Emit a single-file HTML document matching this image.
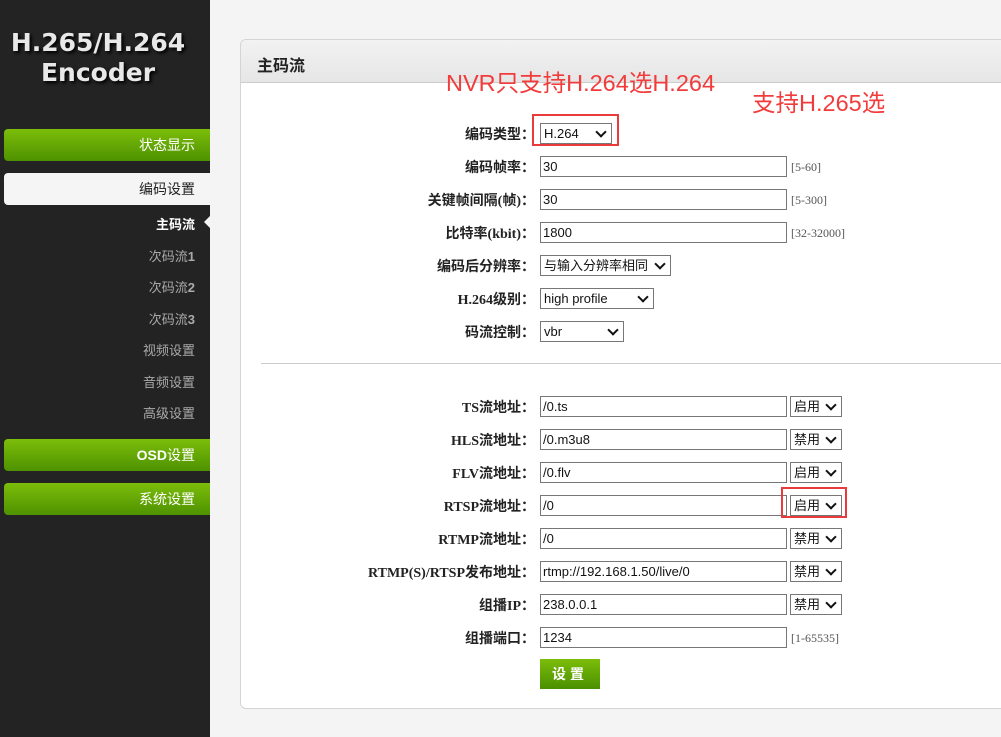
<!DOCTYPE html>
<html><head><meta charset="utf-8"><style>
*{margin:0;padding:0;box-sizing:border-box}
body{width:1001px;height:737px;overflow:hidden;background:#f4f4f4;font-family:"Liberation Sans","Noto Sans CJK SC",sans-serif;position:relative}
#side{position:absolute;left:0;top:0;width:210px;height:737px;background:#232323}
.logo{position:absolute;left:0;width:196px;text-align:center;color:#e8e8e8;font-weight:bold;font-size:25px;font-family:"DejaVu Sans",sans-serif;text-shadow:2px 2px 3px #000}
.btn{position:absolute;left:4px;width:206px;height:32px;border-radius:4px 0 0 4px;background:linear-gradient(#7cbd0a,#4e9200);color:#fff;font-size:14px;text-align:right;padding-right:15px;line-height:32px}
.btn.w{background:#f5f5f5;color:#222}
.sub{position:absolute;right:15px;font-size:13px;color:#aaa;text-align:right}
#panel{position:absolute;left:240px;top:39px;width:800px;height:670px;background:#fff;border:1px solid #d4d4d4;border-radius:6px 0 0 6px}
#hd{height:43px;background:linear-gradient(#f2f2f2,#e6e6e6);border-bottom:1px solid #ccc;border-radius:6px 0 0 0;font-weight:bold;font-size:16px;color:#222;padding:12px 0 0 16px}
.lab{position:absolute;right:466px;width:200px;text-align:right;font-size:14px;font-weight:bold;color:#222;font-family:"Liberation Serif","Noto Sans CJK SC",serif}
.in{position:absolute;left:540px;width:247px;height:21px;border:1px solid #777;font-size:13px;padding:2px 0 0 2px;color:#111;background:#fff;line-height:15px}
.sel{position:absolute;left:540px;height:21px;border:1px solid #777;font-size:13px;padding:2px 0 0 3px;color:#111;background:#fff;line-height:15px}
.sel:after{content:"";position:absolute;right:6px;top:4px;width:6px;height:6px;border-right:2px solid #111;border-bottom:2px solid #111;transform:rotate(45deg)}
.hint{position:absolute;left:791px;font-size:12px;color:#555;font-family:"Liberation Serif",serif}
.red{position:absolute;color:#f23c3c;font-size:23.5px;line-height:26px}
.rb{position:absolute;border:2px solid #e93b3b}
</style></head><body>
<div id="side">
<div class="logo" style="top:28px">H.265/H.264</div>
<div class="logo" style="top:58px">Encoder</div>
<div class="btn" style="top:129px">状态显示</div>
<div class="btn w" style="top:173px">编码设置</div>
<div class="sub" style="top:214px;color:#fff;font-weight:bold">主码流</div>
<div style="position:absolute;left:204px;top:216px;width:0;height:0;border-top:6px solid transparent;border-bottom:6px solid transparent;border-right:6px solid #f4f4f4"></div>
<div class="sub" style="top:246px">次码流<b>1</b></div>
<div class="sub" style="top:277px">次码流<b>2</b></div>
<div class="sub" style="top:309px">次码流<b>3</b></div>
<div class="sub" style="top:340px">视频设置</div>
<div class="sub" style="top:372px">音频设置</div>
<div class="sub" style="top:403px">高级设置</div>
<div class="btn" style="top:439px"><b>OSD</b>设置</div>
<div class="btn" style="top:483px">系统设置</div>
</div>
<div id="panel"><div id="hd">主码流</div>
<div style="position:absolute;left:20px;top:323px;width:800px;border-top:1px solid #ccc"></div>
</div>
<div class="red" style="left:446px;top:70px">NVR只支持H.264选H.264</div>
<div class="red" style="left:752px;top:90px">支持H.265选</div>

<div class="lab" style="top:124px">编码类型：</div><div class="sel" style="top:123px;width:72px">H.264</div>
<div class="lab" style="top:157px">编码帧率：</div><div class="in" style="top:156px">30</div><div class="hint" style="top:160px">[5-60]</div>
<div class="lab" style="top:190px">关键帧间隔(帧)：</div><div class="in" style="top:189px">30</div><div class="hint" style="top:193px">[5-300]</div>
<div class="lab" style="top:223px">比特率(kbit)：</div><div class="in" style="top:222px">1800</div><div class="hint" style="top:226px">[32-32000]</div>
<div class="lab" style="top:256px">编码后分辨率：</div><div class="sel" style="top:255px;width:131px">与输入分辨率相同</div>
<div class="lab" style="top:289px">H.264级别：</div><div class="sel" style="top:288px;width:114px">high profile</div>
<div class="lab" style="top:322px">码流控制：</div><div class="sel" style="top:321px;width:84px">vbr</div>

<div class="lab" style="top:397px">TS流地址：</div><div class="in" style="top:396px">/0.ts</div><div class="sel" style="top:396px;left:790px;width:52px">启用</div>
<div class="lab" style="top:430px">HLS流地址：</div><div class="in" style="top:429px">/0.m3u8</div><div class="sel" style="top:429px;left:790px;width:52px">禁用</div>
<div class="lab" style="top:463px">FLV流地址：</div><div class="in" style="top:462px">/0.flv</div><div class="sel" style="top:462px;left:790px;width:52px">启用</div>
<div class="lab" style="top:496px">RTSP流地址：</div><div class="in" style="top:495px">/0</div><div class="sel" style="top:495px;left:790px;width:52px">启用</div>
<div class="lab" style="top:529px">RTMP流地址：</div><div class="in" style="top:528px">/0</div><div class="sel" style="top:528px;left:790px;width:52px">禁用</div>
<div class="lab" style="top:562px;width:260px">RTMP(S)/RTSP发布地址：</div><div class="in" style="top:561px">rtmp://192.168.1.50/live/0</div><div class="sel" style="top:561px;left:790px;width:52px">禁用</div>
<div class="lab" style="top:595px">组播IP：</div><div class="in" style="top:594px">238.0.0.1</div><div class="sel" style="top:594px;left:790px;width:52px">禁用</div>
<div class="lab" style="top:628px">组播端口：</div><div class="in" style="top:627px">1234</div><div class="hint" style="top:631px">[1-65535]</div>
<div style="position:absolute;left:540px;top:659px;width:60px;height:30px;background:linear-gradient(#7cbd0a,#4a9000);color:#fff;font-weight:bold;font-size:14px;text-align:center;line-height:30px;letter-spacing:4px">设置</div>

<div class="rb" style="left:532px;top:114px;width:87px;height:32px"></div>
<div class="rb" style="left:781px;top:487px;width:66px;height:31px"></div>
</body></html>
